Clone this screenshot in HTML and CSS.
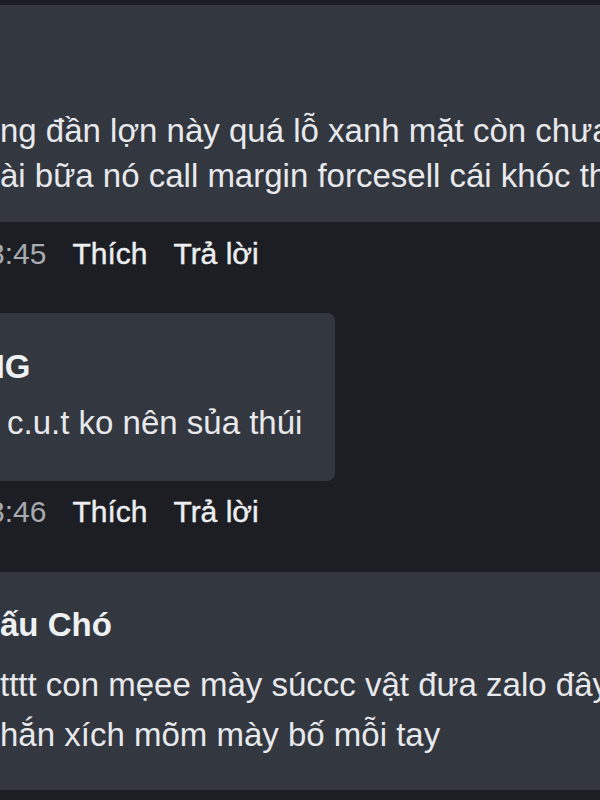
FILE: index.html
```html
<!DOCTYPE html>
<html lang="vi">
<head>
<meta charset="utf-8">
<link rel="stylesheet" href="styles.css">
</head>
<body>
<div class="thread">
  <div class="bubble bubble-wide bubble-first">
    <p class="text text-tight">ng đần lợn này quá lỗ xanh mặt còn chưa</p>
    <p class="text text-tight">ài bữa nó call margin forcesell cái khóc th</p>
  </div>
  <div class="actions">
    <span class="time">3:45</span>
    <span class="link">Thích</span>
    <span class="link">Trả lời</span>
  </div>

  <div class="bubble bubble-narrow">
    <p class="name name-ng">NG</p>
    <p class="text text-single">c.u.t ko nên sủa thúi</p>
  </div>
  <div class="actions actions-second">
    <span class="time">3:46</span>
    <span class="link">Thích</span>
    <span class="link">Trả lời</span>
  </div>

  <div class="bubble bubble-wide bubble-last">
    <p class="name">ấu Chó</p>
    <p class="text text-loose text-after-name">tttt con mẹee mày súccc vật đưa zalo đây</p>
    <p class="text text-loose">hắn xích mõm mày bố mỗi tay</p>
  </div>
</div>
</body>
</html>
```

FILE: styles.css
```css
html, body {
  margin: 0;
  padding: 0;
}

body {
  width: 600px;
  height: 800px;
  overflow: hidden;
  background: #1c1e24;
  font-family: "Liberation Sans", Arial, sans-serif;
  color: #e8e9ec;
}

.thread {
  padding-top: 5px;
  display: flex;
  flex-direction: column;
  align-items: flex-start;
}

p {
  margin: 0;
  white-space: nowrap;
}

.bubble {
  background: #33373f;
  border-radius: 8px;
  margin-left: -20px;
  padding-left: 20px;
  box-sizing: border-box;
}

.bubble-wide {
  width: 660px;
}

.bubble-first {
  height: 217px;
  padding-top: 103px;
}

.bubble-narrow {
  width: 355px;
  height: 168px;
  margin-top: 41px;
  padding-top: 34px;
}

.bubble-last {
  height: 218px;
  margin-top: 42px;
  padding-top: 33px;
}

.text {
  font-size: 33px;
  line-height: 40px;
}

.text-tight {
  line-height: 45px;
}

.text-single {
  margin-top: 16px;
  padding-left: 7px;
}

.text-loose {
  line-height: 50px;
}

.text-after-name {
  margin-top: 15px;
}

.name {
  font-size: 33px;
  line-height: 40px;
  font-weight: bold;
  color: #eef0f2;
}

.name-ng {
  margin-left: -19px;
}

.actions {
  display: flex;
  gap: 26px;
  margin-top: 14px;
  margin-left: -12px;
  font-size: 30px;
  line-height: 36px;
}

.actions-second {
  margin-top: 13px;
}

.time {
  color: #a7aaaf;
}

.link {
  color: #eceef0;
  -webkit-text-stroke: 0.4px #eceef0;
}
```
